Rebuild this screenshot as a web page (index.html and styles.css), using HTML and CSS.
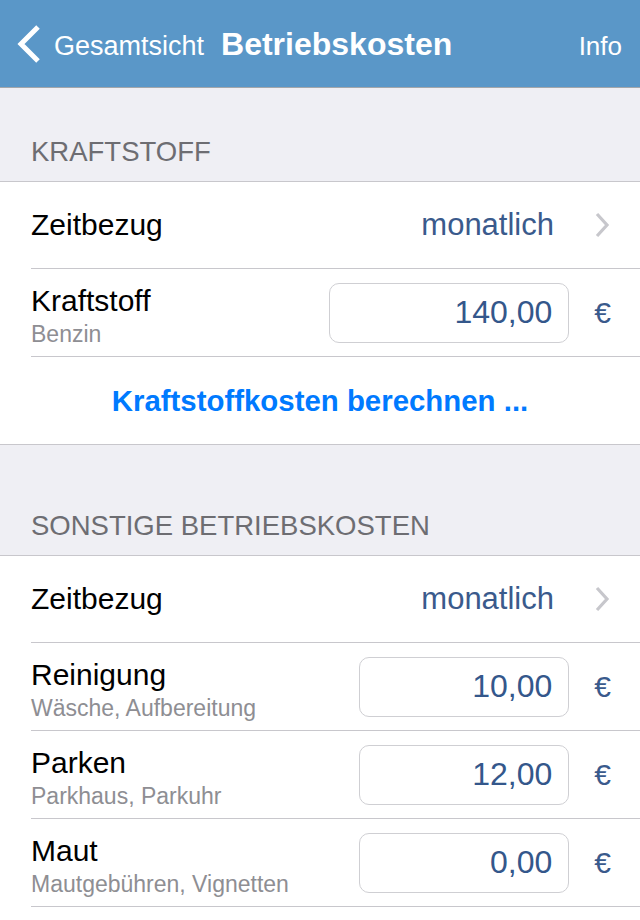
FILE: index.html
```html
<!DOCTYPE html>
<html lang="de">
<head>
  <meta charset="UTF-8" />
  <meta name="viewport" content="width=device-width, initial-scale=1" />
  <title>Betriebskosten</title>
  <link rel="stylesheet" href="styles.css">
</head>
<body>

  <!-- Navigation bar -->
  <header class="navbar">
    <svg class="back-icon" width="26" height="40" viewBox="0 0 26 40">
      <polyline points="23,3 6,20 23,37" fill="none" stroke="#fff" stroke-width="5" />
    </svg>
    <span class="nav-back">Gesamtsicht</span>
    <h1 class="nav-title">Betriebskosten</h1>
    <span class="nav-info">Info</span>
  </header>

  <!-- Kraftstoff -->
  <h2 class="section-header first">KRAFTSTOFF</h2>
  <div class="group">
    <div class="row">
      <span class="row-label">Zeitbezug</span>
      <span class="row-value">monatlich</span>
      <svg class="chevron" width="16" height="26" viewBox="0 0 16 26">
        <polyline points="3,2 13,13 3,24" fill="none" stroke="#c7c7cc" stroke-width="3.2" />
      </svg>
    </div>
    <div class="row">
      <div class="row-text">
        <div class="row-label">Kraftstoff</div>
        <div class="row-sub">Benzin</div>
      </div>
      <div class="amount wide"><span>140,00</span></div>
      <span class="currency">€</span>
    </div>
    <div class="row link-row">
      <a class="link" href="#">Kraftstoffkosten berechnen ...</a>
    </div>
  </div>

  <!-- Sonstige -->
  <h2 class="section-header">SONSTIGE BETRIEBSKOSTEN</h2>
  <div class="group">
    <div class="row">
      <span class="row-label">Zeitbezug</span>
      <span class="row-value">monatlich</span>
      <svg class="chevron" width="16" height="26" viewBox="0 0 16 26">
        <polyline points="3,2 13,13 3,24" fill="none" stroke="#c7c7cc" stroke-width="3.2" />
      </svg>
    </div>
    <div class="row">
      <div class="row-text">
        <div class="row-label">Reinigung</div>
        <div class="row-sub">Wäsche, Aufbereitung</div>
      </div>
      <div class="amount"><span>10,00</span></div>
      <span class="currency">€</span>
    </div>
    <div class="row">
      <div class="row-text">
        <div class="row-label">Parken</div>
        <div class="row-sub">Parkhaus, Parkuhr</div>
      </div>
      <div class="amount"><span>12,00</span></div>
      <span class="currency">€</span>
    </div>
    <div class="row">
      <div class="row-text">
        <div class="row-label">Maut</div>
        <div class="row-sub">Mautgebühren, Vignetten</div>
      </div>
      <div class="amount"><span>0,00</span></div>
      <span class="currency">€</span>
    </div>
    <div class="row empty-row"></div>
  </div>

</body>
</html>
```

FILE: styles.css
```css
body {
  margin: 0;
  background-color: #efeff4;
  font-family: 'Liberation Sans', Arial, sans-serif;
  color: #000;
}

/* Navigation bar */
.navbar {
  height: 88px;
  box-sizing: border-box;
  padding: 26px 18px 0 15px;
  background-color: #5a97c8;
  border-bottom: 1px solid #a3a6aa;
  display: flex;
  align-items: baseline;
  color: #fff;
}

.back-icon {
  align-self: flex-start;
  margin-top: -2px;
  flex-shrink: 0;
}

.nav-back {
  font-size: 27px;
  margin-left: 13px;
}

.nav-title {
  margin: 0 0 0 17px;
  font-size: 32px;
  font-weight: bold;
}

.nav-info {
  font-size: 26px;
  margin-left: auto;
}

/* Section headers */
.section-header {
  margin: 0;
  padding: 65px 31px 13px;
  font-size: 27.5px;
  font-weight: normal;
  line-height: 32px;
  color: #6d6d72;
}

.section-header.first {
  padding-top: 48px;
}

/* Grouped table */
.group {
  background: #fff;
  border-top: 1px solid #c8c7cc;
  border-bottom: 1px solid #c8c7cc;
}

.row {
  min-height: 87px;
  margin-left: 31px;
  padding-right: 29px;
  border-bottom: 1px solid #c8c7cc;
  display: flex;
  align-items: center;
}

.row:first-child {
  min-height: 86px;
}

.row:last-child {
  border-bottom: none;
}

.row-label {
  font-size: 30px;
}

.row-text {
  margin-top: 6px;
}

.row-text .row-label {
  line-height: 34px;
}

.row-sub {
  margin-top: 3px;
  font-size: 23px;
  line-height: 27px;
  color: #8e8e93;
}

.row-value {
  margin-left: auto;
  font-size: 31px;
  color: #3a5a8c;
}

.chevron {
  margin-left: 40px;
  margin-right: 1px;
}

.amount {
  margin-left: auto;
  width: 210px;
  height: 60px;
  box-sizing: border-box;
  padding-right: 16px;
  border: 1px solid #cfcfd3;
  border-radius: 10px;
  display: flex;
  align-items: center;
  justify-content: flex-end;
  font-size: 32px;
  color: #34578b;
}

.amount.wide {
  width: 240px;
}

.currency {
  margin-left: 25px;
  font-size: 30px;
  color: #3a5a8c;
}

.link-row {
  margin-left: 0;
  padding-right: 0;
  justify-content: center;
}

.link {
  font-size: 29.4px;
  font-weight: bold;
  color: #007aff;
  text-decoration: none;
}

.empty-row {
  min-height: 60px;
}
```
